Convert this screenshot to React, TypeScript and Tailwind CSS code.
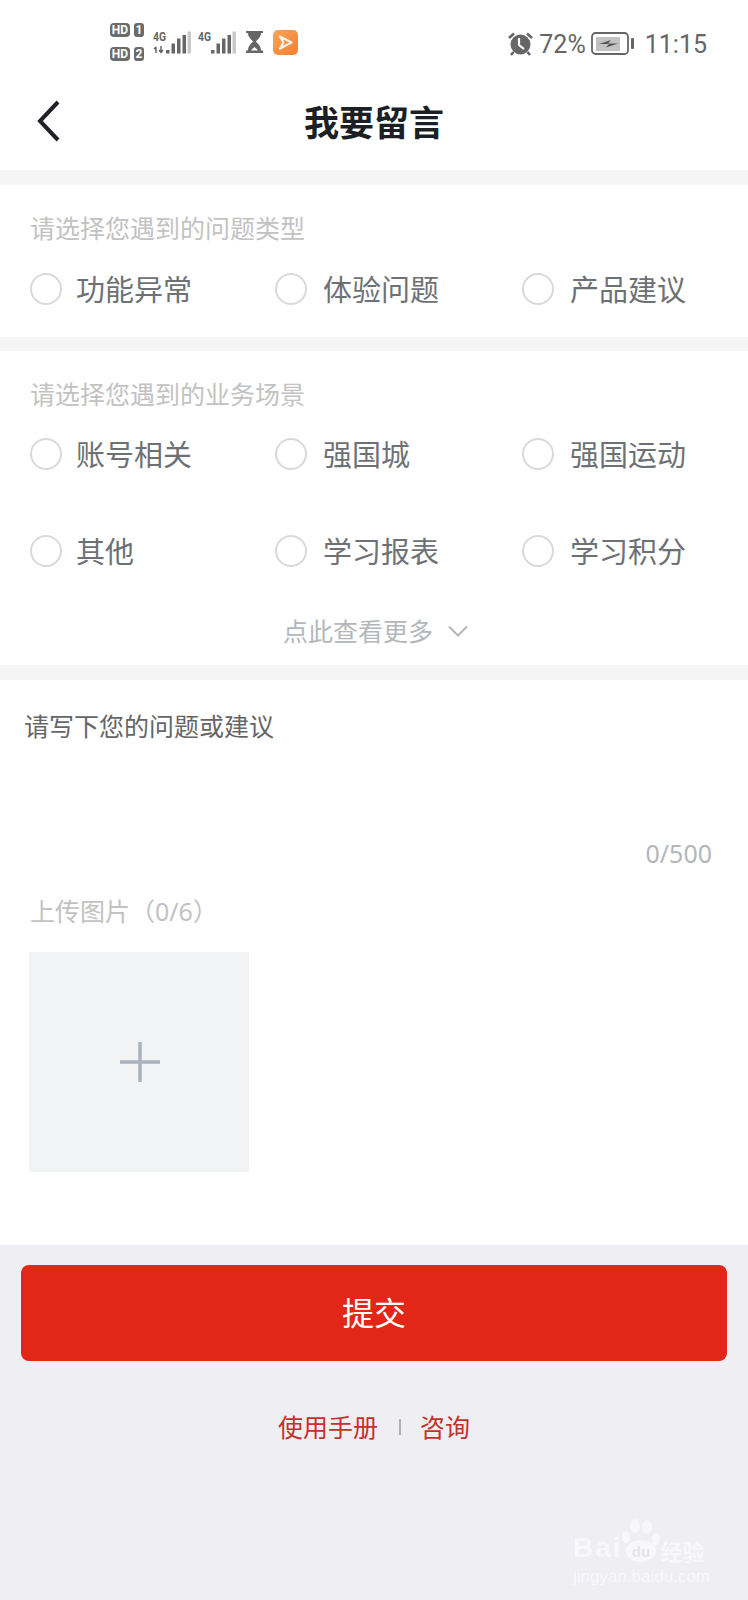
const cjk = "font-['Noto_Sans','Noto_Sans_CJK_SC',sans-serif]";

function SignalBars({ dual }: { dual?: boolean }) {
  return (
    <svg width="38" height="24" viewBox="0 0 38 24">
      <text x="0" y="11" fontSize="12" fontWeight="700" fill="#666" fontFamily="Roboto, sans-serif" textLength="13" lengthAdjust="spacingAndGlyphs">4G</text>
      {dual && <path d="M3 17v6M1 19l2-2M8 16v6M6 20l2 2.500 2-2.500" stroke="#666" strokeWidth="1.500" fill="none" />}
      <rect x="13" y="20" width="3.500" height="3.500" fill="#666" />
      <rect x="18.500" y="13.500" width="3.500" height="10" fill="#666" />
      <rect x="24" y="8.500" width="3.500" height="15" fill="#666" />
      <rect x="29.500" y="5" width="3.500" height="18.500" fill="#666" />
      <rect x="34.500" y="1.500" width="3.500" height="22" fill="#c9c9c9" />
    </svg>
  );
}

function HdBadge({ n }: { n: string }) {
  return (
    <div className="flex h-[14px] items-center gap-[4px] font-['Roboto',sans-serif] text-[12px] font-bold leading-none text-white">
      <span className="flex h-[14px] w-[20px] items-center justify-center rounded-[4px] bg-[#6b6b6b]">HD</span>
      <span className="flex h-[14px] w-[10px] items-center justify-center rounded-[3px] bg-[#6b6b6b]">{n}</span>
    </div>
  );
}

function StatusBar() {
  return (
    <div className="flex h-[80px] items-start justify-between pl-[110px] pr-[41px]">
      <div className="flex items-center pt-[23px]">
        <div className="flex flex-col gap-[10px]">
          <HdBadge n="1" />
          <HdBadge n="2" />
        </div>
        <div className="ml-[9px]"><SignalBars dual /></div>
        <div className="ml-[7px]"><SignalBars /></div>
        <svg width="17" height="22" viewBox="0 0 17 22" className="ml-[10px]">
          <path d="M0 0h17v2h-2c0 4-3 6-5 8.500 2 2.500 5 4.500 5 9h2v2.500H0v-2.500h2c0-4.500 3-6.500 5-9C5 8 2 6 2 2H0z" fill="#666" />
          <path d="M5 19.500c1-1.500 2.500-2.500 3.500-3.500 1 1 2.500 2 3.500 3.500z" fill="#fff" />
        </svg>
        <div className="ml-[10px] flex h-[25px] w-[25px] items-center justify-center rounded-[5px] bg-gradient-to-br from-[#f8a55a] to-[#f37f2c]">
          <svg width="15" height="15" viewBox="0 0 15 15">
            <path d="M2 1.500l11.500 6L2 13.500l3.500-6z" fill="none" stroke="#fff" strokeOpacity="0.85" strokeWidth="2.200" strokeLinejoin="round" />
          </svg>
        </div>
      </div>
      <div className="flex h-[88px] items-center text-[25px] leading-none text-[#666] font-['Roboto',sans-serif]">
        <svg width="25" height="24" viewBox="0 0 25 24">
          <circle cx="12.500" cy="12.500" r="10" fill="#666" />
          <path d="M11 6v7l5 4" stroke="#fff" strokeWidth="2.200" fill="none" />
          <path d="M1 6l5-4.500M24 6l-5-4.500M5.500 20l-2.500 3M19.500 20l2.500 3" stroke="#666" strokeWidth="2.600" />
        </svg>
        <span className="ml-[6px]">72%</span>
        <svg width="44" height="24" viewBox="0 0 44 24" className="ml-[5px]">
          <rect x="1" y="1" width="36" height="21" rx="3.500" fill="#fff" stroke="#666" strokeWidth="1.800" />
          <rect x="5" y="5" width="24" height="14" fill="#c2c2c2" />
          <path d="M8 12l12-4-3 3.500h10l-12 4 3-3.500z" fill="#555" />
          <rect x="40" y="6" width="3" height="11" rx="1" fill="#666" />
        </svg>
        <span className="ml-[10px]">11:15</span>
      </div>
    </div>
  );
}

function Option({ label, first }: { label: string; first?: boolean }) {
  return (
    <div className="flex h-[48px] items-center">
      <span className="h-[32px] w-[32px] rounded-full border-2 border-[#d9d9d9] bg-white" />
      <span className={`${first ? 'ml-[14px]' : 'ml-[16px]'} text-[29px] leading-none text-[#6e7174]`}>{label}</span>
    </div>
  );
}

export default function App() {
  return (
    <div className={`relative h-[1600px] w-[748px] overflow-hidden bg-[#f5f5f5] ${cjk}`}>
      <div className="bg-white">
        <StatusBar />
        <div className="relative flex h-[90px] items-center justify-center">
          <svg width="24" height="42" viewBox="0 0 24 42" className="absolute left-[37px] top-[20px]">
            <path d="M21 2L3 21l18 19" fill="none" stroke="#1f2226" strokeWidth="4" />
          </svg>
          <h1 className="mb-[6px] text-[35px] font-bold leading-none text-[#1c1f23]">我要留言</h1>
        </div>
      </div>

      <div className="mt-[15px] bg-white pl-[30px] pt-[27px] pb-[24px]">
        <p className="text-[25px] leading-[32px] text-[#c2c2c2]">请选择您遇到的问题类型</p>
        <div className="mt-[21px] grid grid-cols-[245px_247px_1fr]">
          <Option first label="功能异常" />
          <Option label="体验问题" />
          <Option label="产品建议" />
        </div>
      </div>

      <div className="mt-[14px] bg-white pt-[27px] pb-[18px]">
        <p className="pl-[30px] text-[25px] leading-[32px] text-[#c2c2c2]">请选择您遇到的业务场景</p>
        <div className="mt-[20px] grid grid-cols-[245px_247px_1fr] gap-y-[49px] pl-[30px]">
          <Option first label="账号相关" />
          <Option label="强国城" />
          <Option label="强国运动" />
          <Option first label="其他" />
          <Option label="学习报表" />
          <Option label="学习积分" />
        </div>
        <div className="mt-[40px] flex h-[32px] items-center justify-center pl-[3px]">
          <span className="text-[25px] leading-none text-[#b4b7ba]">点此查看更多</span>
          <svg width="20" height="12" viewBox="0 0 20 12" className="ml-[15px]">
            <path d="M1 1.500l9 9 9-9" fill="none" stroke="#b4b7ba" strokeWidth="2" />
          </svg>
        </div>
      </div>

      <div className="mt-[15px] h-[565px] bg-white pt-[30px]">
        <p className="pl-[24px] text-[25px] leading-[32px] text-[#666]">请写下您的问题或建议</p>
        <p className="mt-[95px] pr-[36px] text-right text-[25px] leading-[32px] text-[#b4b7ba]">0/500</p>
        <p className="mt-[26px] pl-[30px] text-[25px] leading-[32px] text-[#c2c2c2]">上传图片（0/6）</p>
        <div className="ml-[29px] mt-[25px] flex h-[220px] w-[220px] items-center justify-center bg-[#f2f3f5]">
          <svg width="40" height="40" viewBox="0 0 40 40" className="ml-[2px]">
            <path d="M20 0v40M0 20h40" stroke="#aab2bd" strokeWidth="3.500" />
          </svg>
        </div>
      </div>

      <div className="h-[355px] bg-[#eeeef3] pt-[20px]">
        <button className="ml-[21px] flex h-[96px] w-[706px] items-center justify-center rounded-[8px] bg-[#e22718] text-[32px] text-white">
          提交
        </button>

        <div className="mt-[50px] flex h-[32px] items-center justify-center text-[25px] leading-none text-[#c5302b]">
          <span>使用手册</span>
          <span className="ml-[21px] mr-[19px] h-[16px] w-[2px] bg-[#b0b0b4]" />
          <span>咨询</span>
        </div>
      </div>

      {/* baidu watermark */}
      <div className="absolute left-[573px] top-[1519px] whitespace-nowrap text-[#f8f8fb]">
        <div className="flex items-end">
          <span className="mb-[1px] font-['Liberation_Sans',sans-serif] text-[28px] font-bold leading-none tracking-[2px]">Bai</span>
          <svg width="40" height="44" viewBox="0 0 40 44" className="ml-[-2px]">
            <ellipse cx="14" cy="7" rx="5" ry="7" fill="#f8f8fb" />
            <ellipse cx="26" cy="8" rx="5" ry="7" fill="#f8f8fb" />
            <ellipse cx="5" cy="18" rx="4" ry="6" fill="#f8f8fb" />
            <ellipse cx="35" cy="20" rx="4" ry="6" fill="#f8f8fb" />
            <ellipse cx="20" cy="32" rx="15" ry="11" fill="#f8f8fb" />
            <text x="20" y="38" textAnchor="middle" fontSize="15" fontWeight="700" fill="#e4e4ea" fontFamily="Liberation Sans, sans-serif">du</text>
          </svg>
          <span className="mb-[1px] text-[22px] font-bold leading-none">经验</span>
        </div>
        <p className="mt-[5px] font-['Liberation_Sans',sans-serif] text-[17px] leading-none">jingyan.baidu.com</p>
      </div>
    </div>
  );
}
